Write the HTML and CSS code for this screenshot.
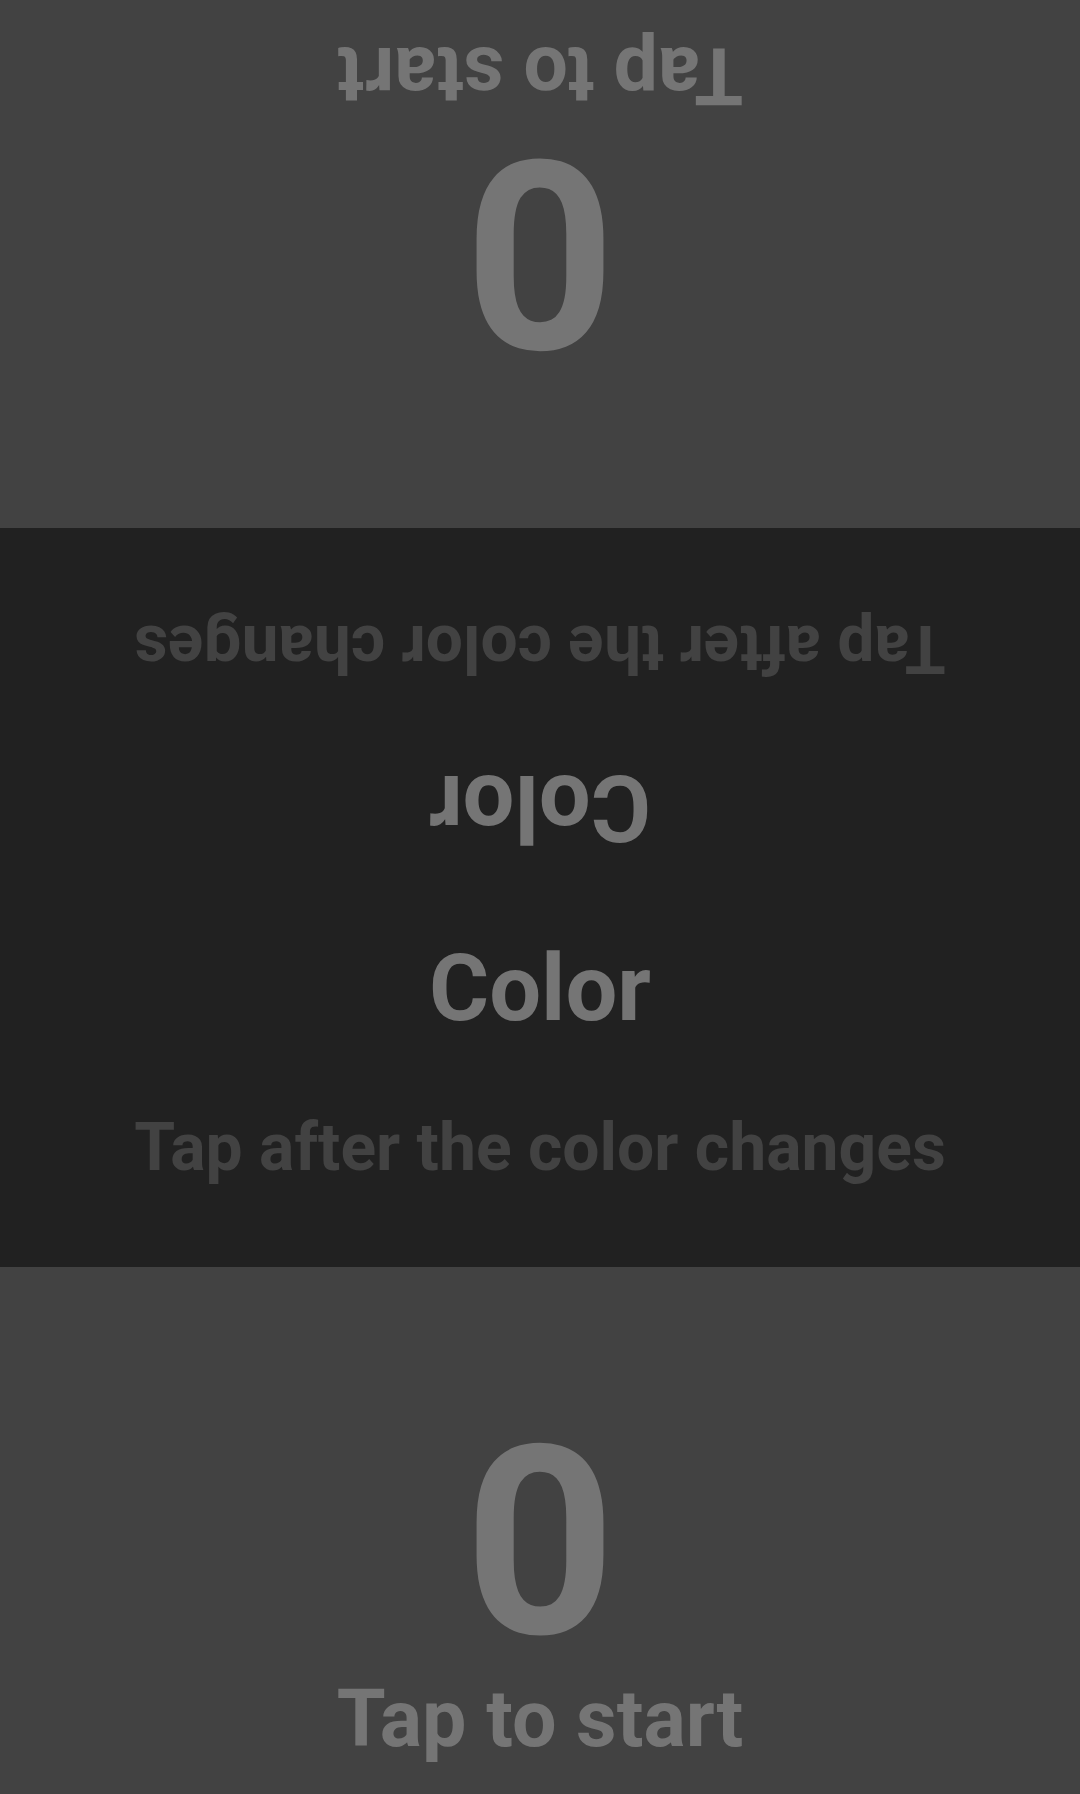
FILE: index.html
```html
<!DOCTYPE html>
<html lang="en">
<head>
<meta charset="utf-8">
<title>Reaction</title>
<link rel="stylesheet" href="styles.css">
</head>
<body>
<div class="screen">
  <section class="player player-top">
    <div class="score">0</div>
    <div class="hint">Tap to start</div>
  </section>
  <section class="arena">
    <div class="half half-flipped">
      <div class="signal">Color</div>
      <div class="instruction">Tap after the color changes</div>
    </div>
    <div class="half">
      <div class="signal">Color</div>
      <div class="instruction">Tap after the color changes</div>
    </div>
  </section>
  <section class="player">
    <div class="score">0</div>
    <div class="hint">Tap to start</div>
  </section>
</div>
</body>
</html>
```

FILE: styles.css
```css
html, body {
  margin: 0;
  padding: 0;
  width: 1080px;
  height: 1794px;
  overflow: hidden;
  background: #212121;
}

.screen {
  display: flex;
  flex-direction: column;
  width: 1080px;
  height: 1794px;
  font-family: Roboto, "Noto Sans", sans-serif;
  font-weight: 700;
}

.player {
  height: 527px;
  flex: none;
  background: #424242;
  color: #757575;
  display: flex;
  flex-direction: column;
  align-items: center;
  justify-content: flex-end;
  padding-bottom: 35px;
  box-sizing: border-box;
}

.player-top {
  height: 528px;
  transform: rotate(180deg);
}

.score {
  font-size: 264px;
  line-height: 1;
}

.hint {
  font-size: 79px;
  line-height: 1;
  margin-top: 5px;
}

.arena {
  flex: 1;
  background: #212121;
  display: flex;
  flex-direction: column;
}

.half {
  flex: 1;
  display: flex;
  flex-direction: column;
  align-items: center;
  padding-top: 45px;
  box-sizing: border-box;
}

.half-flipped {
  transform: rotate(180deg);
}

.signal {
  font-size: 92px;
  line-height: 1;
  color: #757575;
}

.instruction {
  font-size: 66px;
  line-height: 1;
  color: #424242;
  margin-top: 80px;
  white-space: nowrap;
}
```
